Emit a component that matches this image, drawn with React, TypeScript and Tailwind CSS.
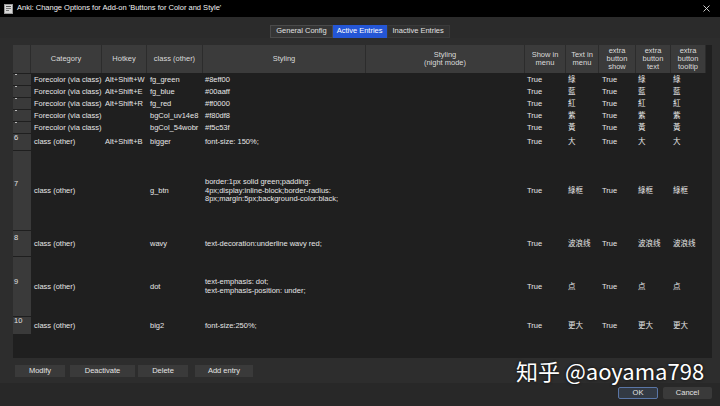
import React from "react";

const COLS =
  "grid grid-cols-[18px_71px_45px_56px_163px_159px_41px_33px_37px_35px_35px]";

type Row = {
  h: string;
  label: string;
  labelCls: string;
  cat: string;
  hot: string;
  cls: string;
  sty: React.ReactNode;
  txt: string;
};

const rows: Row[] = [
  { h: "h-[12px]", label: "", labelCls: "", cat: "Forecolor (via class)", hot: "Alt+Shift+W", cls: "fg_green", sty: "#8eff00", txt: "綠" },
  { h: "h-[12px]", label: "", labelCls: "", cat: "Forecolor (via class)", hot: "Alt+Shift+E", cls: "fg_blue", sty: "#00aaff", txt: "藍" },
  { h: "h-[12px]", label: "", labelCls: "", cat: "Forecolor (via class)", hot: "Alt+Shift+R", cls: "fg_red", sty: "#ff0000", txt: "紅" },
  { h: "h-[12px]", label: "", labelCls: "", cat: "Forecolor (via class)", hot: "", cls: "bgCol_uv14e8", sty: "#f80df8", txt: "紫" },
  { h: "h-[12px]", label: "", labelCls: "", cat: "Forecolor (via class)", hot: "", cls: "bgCol_54wobr", sty: "#f5c53f", txt: "黃" },
  { h: "h-[17px]", label: "6", labelCls: "pt-[0px]", cat: "class (other)", hot: "Alt+Shift+B", cls: "bigger", sty: "font-size: 150%;", txt: "大" },
  {
    h: "h-[80px]",
    label: "7",
    labelCls: "pt-[29px]",
    cat: "class (other)",
    hot: "",
    cls: "g_btn",
    sty: (
      <>
        border:1px solid green;padding:
        <br />
        4px;display:inline-block;border-radius:
        <br />
        8px;margin:5px;background-color:black;
      </>
    ),
    txt: "綠框",
  },
  { h: "h-[26px]", label: "8", labelCls: "pt-[3px]", cat: "class (other)", hot: "", cls: "wavy", sty: "text-decoration:underline wavy red;", txt: "波浪线" },
  {
    h: "h-[60px]",
    label: "9",
    labelCls: "pt-[21px]",
    cat: "class (other)",
    hot: "",
    cls: "dot",
    sty: (
      <>
        text-emphasis: dot;
        <br />
        text-emphasis-position: under;
      </>
    ),
    txt: "点",
  },
  { h: "h-[18px]", label: "10", labelCls: "pt-[0px]", cat: "class (other)", hot: "", cls: "big2", sty: "font-size:250%;", txt: "更大" },
];

const headers: React.ReactNode[] = [
  "",
  "Category",
  "Hotkey",
  "class (other)",
  "Styling",
  <>
    Styling
    <br />
    (night mode)
  </>,
  <>
    Show in
    <br />
    menu
  </>,
  <>
    Text in
    <br />
    menu
  </>,
  <>
    extra
    <br />
    button
    <br />
    show
  </>,
  <>
    extra
    <br />
    button
    <br />
    text
  </>,
  <>
    extra
    <br />
    button
    <br />
    tooltip
  </>,
];

function Cell({ children, pl = "pl-[2px]" }: { children?: React.ReactNode; pl?: string }) {
  return (
    <div className={`flex items-center overflow-hidden whitespace-nowrap ${pl}`}>
      <div>{children}</div>
    </div>
  );
}

export default function App() {
  return (
    <div className="relative flex h-[406px] w-[720px] flex-col overflow-hidden bg-[#282828] text-[7.5px] leading-[8.6px] text-[#e6e6e6] [font-family:'Liberation_Sans','Noto_Sans_CJK_SC',sans-serif]">
      {/* Title bar */}
      <div className="flex h-[17px] shrink-0 items-center bg-black pl-[4px] pr-[10px]">
        <svg width="9" height="10" viewBox="0 0 9 10" className="shrink-0">
          <rect x="0.5" y="0.5" width="8" height="9" fill="#d8d8d8" stroke="#9a9a9a" />
          <rect x="2" y="2" width="5" height="1" fill="#555" />
          <rect x="2" y="4" width="5" height="1" fill="#777" />
          <rect x="2" y="6" width="3" height="1" fill="#777" />
        </svg>
        <div className="ml-[4px] text-[#f0f0f0]">
          Anki: Change Options for Add-on &apos;Buttons for Color and Style&apos;
        </div>
        <div className="flex-1" />
        <svg width="7" height="7" viewBox="0 0 7 7">
          <path d="M0.5 0.5L6.5 6.5M6.5 0.5L0.5 6.5" stroke="#e0e0e0" strokeWidth="0.9" />
        </svg>
      </div>

      {/* Tabs */}
      <div className="flex shrink-0 justify-center bg-[#2b2b2b] pt-[8px]">
        <div className="flex h-[13px] items-center border border-[#4a4a4a] bg-[#353535] px-[5px] text-[#e0e0e0]">
          General Config
        </div>
        <div className="flex h-[13px] items-center bg-[#2456d6] px-[4px] text-white">Active Entries</div>
        <div className="flex h-[13px] items-center border border-[#3a3a3a] bg-[#323232] px-[5px] text-[#e0e0e0]">
          Inactive Entries
        </div>
      </div>

      {/* Pane */}
      <div className="flex h-[345px] shrink-0 flex-col bg-[#2d2d2d] pl-[13px] pt-[7px]">
        {/* Table */}
        <div className="flex h-[313px] w-[699px] flex-col overflow-hidden bg-[#1f1f1f]">
          {/* Header */}
          <div className="flex h-[29px] shrink-0">
            <div className={`${COLS} h-[28px] bg-[#3b3b3b] text-[#dadada]`}>
              {headers.map((h, i) => (
                <div
                  key={i}
                  className="flex items-center justify-center border-r border-[#2c2c2c] text-center leading-[8.3px]"
                >
                  <div>{h}</div>
                </div>
              ))}
            </div>
          </div>
          {/* Rows */}
          {rows.map((r, i) => (
            <div key={i} className={`${COLS} ${r.h} shrink-0`}>
              <div className={`relative border-b border-[#1f1f1f] bg-[#3a3a3a] pl-[1px] text-[#e0e0e0] ${r.labelCls}`}>
                {r.label ? r.label : <div className="ml-[1px] h-[1px] w-[2px] bg-[#bdbdbd]" />}
              </div>
              <Cell pl="pl-[3px]">{r.cat}</Cell>
              <Cell pl="pl-[3px]">{r.hot}</Cell>
              <Cell pl="pl-[3px]">{r.cls}</Cell>
              <Cell>{r.sty}</Cell>
              <Cell />
              <Cell>True</Cell>
              <Cell>{r.txt}</Cell>
              <Cell pl="pl-[3px]">True</Cell>
              <Cell>{r.txt}</Cell>
              <Cell>{r.txt}</Cell>
            </div>
          ))}
          <div className="flex-1" />
        </div>

        {/* Buttons */}
        <div className="mt-[7px] flex h-[12px] text-[#e4e4e4]">
          <div className="ml-[2px] flex w-[50px] items-center justify-center bg-[#3a3a3a]">Modify</div>
          <div className="ml-[5px] flex w-[65px] items-center justify-center bg-[#3a3a3a]">Deactivate</div>
          <div className="ml-[3px] flex w-[50px] items-center justify-center bg-[#3a3a3a]">Delete</div>
          <div className="ml-[7px] flex w-[58px] items-center justify-center bg-[#3a3a3a]">Add entry</div>
        </div>
      </div>

      {/* Dialog buttons */}
      <div className="flex shrink-0 justify-end gap-[5px] pr-[8px] pt-[4px] text-[#e4e4e4]">
        <div className="flex h-[12px] w-[40px] items-center justify-center rounded-[2px] border border-[#5a76a6] bg-[#333a44]">
          OK
        </div>
        <div className="flex h-[12px] w-[49px] items-center justify-center rounded-[2px] bg-[#3a3a3a]">Cancel</div>
      </div>

      {/* Watermark */}
      <div className="absolute left-[516px] top-[355px] text-[22px] leading-[30px] text-white [font-family:'Noto_Sans_CJK_SC','Noto_Sans',sans-serif] [text-shadow:0_0_3px_rgba(0,0,0,0.9)]">
        知乎 @aoyama798
      </div>
    </div>
  );
}
